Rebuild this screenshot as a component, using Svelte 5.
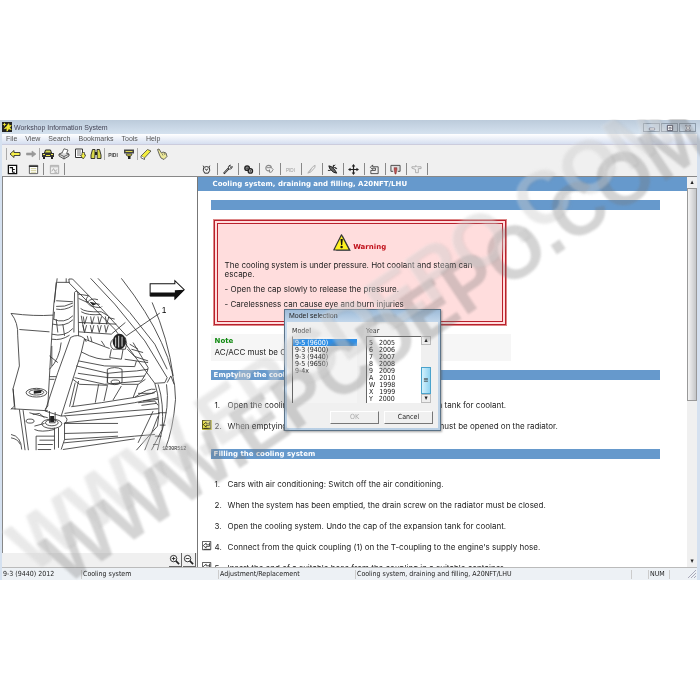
<script>
  const ink = 'fill="none" stroke="#222" stroke-width="1"';
  const dim = 'fill="none" stroke="#aaa" stroke-width="1"';
  const icons = {
    back: '<path d="M1 6 5 2.500V4.500H11V7.500H5V9.500Z" fill="#f5ef4a" stroke="#333" stroke-width=".9"/>',
    forward: '<path d="M11 6 7 3V5H1.500V7H7V9Z" fill="#999" stroke="#999" stroke-width=".6"/>',
    car: '<path d="M2.500 5 3.500 2H8.500L9.500 5Z" fill="#d8dc50" stroke="#222"/><path d="M0 5H12V9H0Z" fill="#333"/><path d="M1 6.500H3M9 6.500H11M4 7.500H8" stroke="#eee84a"/><path d="M1 9V11H3V9M9 9V11H11V9" fill="#222"/>',
    print: '<path d="M1 6 6 4 11 6V8L6 11 1 8Z" fill="#ddd" stroke="#333" stroke-width=".8"/><path d="M4 5 6 .8 10 2 8.500 5.500" fill="#fff" stroke="#444" stroke-width=".8"/><path d="M1 6 6 8.500 11 6M6 8.500V11" fill="none" stroke="#444" stroke-width=".8"/>',
    page: '<path d="M1.500 1H8.500V9.500H1.500Z" fill="#fff" stroke="#333"/><path d="M3 3H7M3 5H7M3 7H6" stroke="#555" stroke-width=".8"/><path d="M8 4.500H10.500V7H12L9.200 11 6.300 7H8Z" fill="#f3ee45" stroke="#333" stroke-width=".7"/>',
    binoculars: '<path d="M2.500 1.500H5V5L4.800 10.500H1V7ZM7 1.500H9.500L11 7V10.500H7.200V5Z" fill="#d9d94b" stroke="#222" stroke-width=".9"/><path d="M5 4H7V7H5Z" fill="#222"/>',
    pidi: '<text x="6" y="8.500" text-anchor="middle" font-family="Liberation Sans" font-weight="bold" font-size="5" fill="#444">PIDI</text>',
    pidiDim: '<text x="6" y="8.500" text-anchor="middle" font-family="Liberation Sans" font-size="5" fill="#999">PIDI</text>',
    lamp: '<path d="M1 1.500H11V5.500H1Z" fill="#444"/><path d="M2.500 3.500H9.500" stroke="#ddd84b"/><path d="M3 6H9L8 8H4Z" fill="#e6e04b" stroke="#222" stroke-width=".7"/><path d="M5 8V11H7.500V8" fill="#222"/>',
    eraser: '<path d="M1 8 7.500 1.500 11 3 4.500 10Z" fill="#f2ed3f" stroke="#444" stroke-width=".8"/><path d="M1 8V9.800L4.500 11.500V10" fill="#fff" stroke="#444" stroke-width=".8"/>',
    hand: '<path d="M3.500 7 1.500 1.500 3 1 5.500 5 7 4 10 5 11 8.500 8 11.500 5 10Z" fill="#eeea9b" stroke="#444" stroke-width=".8"/><path d="M6 5.500 7 7.500M8 5 9 7" stroke="#444" stroke-width=".6"/>',
    tree: '<path d="M1.500 1.500H10.500V10.500H1.500Z" fill="#fff" stroke="#111" stroke-width="1.400"/><path d="M3 4H6V9M6 6H8.500M6 9H8.500" fill="none" stroke="#111" stroke-width="1.200"/>',
    sheet: '<path d="M1.500 1.500H10.500V10.500H1.500Z" fill="#fff" stroke="#555"/><path d="M1 2.500H11" stroke="#333" stroke-width="1.500"/><path d="M3 5H9M3 7H9M3 9H9" stroke="#c4c07c" stroke-width=".8"/>',
    chart: `<path d="M1.500 1.500H10.500V10.500H1.500ZM2 3H10M3 8 5 5 6.500 8 9 6M6 9H9" ${dim}/>`,
    gauge: `<path d="M2 2 4 3.500Q6 2 8 3.500L10 2M3 3.500Q1.500 7 4 10H8Q10.500 7 9 3.500M4.500 5 6 7 7.500 5" ${ink}/>`,
    wrench: '<path d="M2 10.500 7 5" stroke="#222" stroke-width="2.200"/><path d="M7 5.500Q6 2 9 1L8.500 3 10 4 11 2.500Q11.500 6 7 5.500Z" fill="#fff" stroke="#222" stroke-width=".9"/><path d="M2.500 10 6.500 5.600" stroke="#eee" stroke-width=".7"/>',
    gears: '<circle cx="4.500" cy="4.500" r="2.500" fill="#999" stroke="#222" stroke-width="1.500"/><circle cx="8" cy="7.500" r="2.400" fill="#bbb" stroke="#222" stroke-width="1.400"/><circle cx="8" cy="7.500" r=".8" fill="#222"/><circle cx="4.500" cy="4.500" r=".8" fill="#222"/>',
    gearDim: '<circle cx="5" cy="4.500" r="3" fill="none" stroke="#888" stroke-width="1.200"/><path d="M3 4H8L10 6 8 9H6V6" fill="#eee" stroke="#777" stroke-width=".9"/>',
    pen: `<path d="M2 10 4 7 8 2.500 10 1.500 9.500 4 5.500 8.500Z" ${dim}/><path d="M3 9 6 6" stroke="#bbb"/>`,
    tool: '<path d="M2 2 5 3 9 7 10.500 10 7 9 3 5Z" fill="#666" stroke="#111"/><path d="M7 1V4H10M1 7H4M6 3 9 1M9 5H11" stroke="#222" fill="none"/>',
    move: '<path d="M6 2V10M2 6H10" stroke="#222" stroke-width="1.300"/><path d="M6 0 8 2.800H4ZM6 12 4 9.200H8ZM0 6 2.800 4V8ZM12 6 9.200 8V4Z" fill="#222"/>',
    turn: '<path d="M4 1 1.500 3.500 4 6V4.500H7V7H2V10.500H10V3H4Z" fill="#eee" stroke="#333" stroke-width=".9"/>',
    board: '<path d="M1 1.500H11V8H8.500M3.500 8H1V1.500" fill="#ddd" stroke="#444"/><path d="M4.500 4H7.500V6L6.500 11H5.500L4.500 6Z" fill="#c05050" stroke="#622" stroke-width=".5"/>',
    point: `<path d="M1 3H5V1.800L7 3H11V5H8V9.500H5V6L1 4.500Z" ${dim}/>`,
    link: '<path d="M.5.500H10.500V10.500H.5Z" fill="#fff" stroke="#333"/><path d="M1.500 5.500 5 2.500V4.500H9M1.500 5.500 5 8.500V6.500H9V2M2 10H10" fill="none" stroke="#222" stroke-width=".9"/>',
    zoomIn: '<circle cx="5" cy="5" r="3.500" fill="#fff" stroke="#222"/><path d="M3 5H7M5 3V7" stroke="#222"/><path d="M7.500 7.500 11 11" stroke="#222" stroke-width="1.800"/>',
    zoomOut: '<circle cx="5" cy="5" r="3.500" fill="#fff" stroke="#222"/><path d="M3 5H7" stroke="#222"/><path d="M7.500 7.500 11 11" stroke="#222" stroke-width="1.800"/>',
  };
  const menus = ['File', 'View', 'Search', 'Bookmarks', 'Tools', 'Help'];
  const tools = [
    ['back', 'forward'],
    ['car', 'print', 'page', 'binoculars'],
    ['pidi', 'lamp'],
    ['eraser', 'hand'],
  ];
  const leftTabs = ['tree', 'sheet', 'chart'];
  const rightTabs = ['gauge', 'wrench', 'gears', 'gearDim', 'pidiDim', 'pen', 'tool', 'move', 'turn', 'board', 'point'];
  const emptying = [
    { text: 'Open the cooling system. Undo the cap of the expansion tank for coolant.' },
    { text: 'When emptying the cooling system, the drain screw (1) must be opened on the radiator.', link: 'lit' },
  ];
  const filling = [
    { text: 'Cars with air conditioning: Switch off the air conditioning.' },
    { text: 'When the system has been emptied, the drain screw on the radiator must be closed.' },
    { text: 'Open the cooling system. Undo the cap of the expansion tank for coolant.' },
    { text: "Connect from the quick coupling (1) on the T-coupling to the engine's supply hose.", link: 'plain' },
    { text: 'Insert the end of a suitable hose from the coupling in a suitable container.', link: 'plain' },
  ];
  const models = ['9-5 (9600)', '9-3 (9400)', '9-3 (9440)', '9-5 (9650)', '9-4x'];
  const years = [['5', 2005], ['6', 2006], ['7', 2007], ['8', 2008], ['9', 2009], ['A', 2010], ['W', 1998], ['X', 1999], ['Y', 2000]];
  let model = $state('9-5 (9600)');
  let year = $state(null);
</script>

{#snippet icon(name)}
  <svg class="icon" viewBox="0 0 12 12" aria-hidden="true">{@html icons[name]}</svg>
{/snippet}

{#snippet steps(items)}
  <ol>
    {#each items as item, i}
      <li>
        <span class="mark">
          {#if item.link}
            <a href="#figure" class:lit={item.link === 'lit'} aria-label="Show figure">{@render icon('link')}</a>
          {/if}
        </span>
        <span class="num">{i + 1}.</span>
        <span>{item.text}</span>
      </li>
    {/each}
  </ol>
{/snippet}

<div class="page">
  <div class="window">
    <header class="title">
      <svg class="icon" viewBox="0 0 12 12" aria-hidden="true">
        <path d="M0 0H12V12H0Z" fill="#222" />
        <path d="M3 1V5M1 3H5M8 2 9 5 11 4 9 7 11 9 8 8 6 11V7L3 8 6 5Z" stroke="#f4ea34" fill="#f4ea34" />
      </svg>
      <span>Workshop Information System</span>
      <div class="winbtns">
        <button aria-label="Minimize"><svg class="icon" viewBox="0 0 12 12"><path d="M2 6H10V9H2Z" fill="#fff" stroke="#667" /></svg></button>
        <button aria-label="Maximize"><svg class="icon" viewBox="0 0 12 12"><path d="M2 2H10V10H2Z" fill="#fff" stroke="#556" stroke-width="1.500" /><path d="M4.500 5H7.500V7.500H4.500Z" fill="none" stroke="#556" /></svg></button>
        <button aria-label="Close"><svg class="icon" viewBox="0 0 12 12"><path d="M2 2H4.500L6 4 7.500 2H10L7.500 6 10 10H7.500L6 8 4.500 10H2L4.500 6Z" fill="#fff" stroke="#667" /></svg></button>
      </div>
    </header>

    <nav class="menu">
      {#each menus as m}<button>{m}</button>{/each}
    </nav>

    <div class="toolbar">
      {#each tools as group}
        <div class="group">
          {#each group as name}<button aria-label={name}>{@render icon(name)}</button>{/each}
        </div>
      {/each}
    </div>

    <div class="body">
      <section class="left">
        <div class="tabs">
          {#each leftTabs as name, i}<button class:lined={i > 0} aria-label={name}>{@render icon(name)}</button>{/each}
        </div>
        <div class="figure" id="figure">
          <svg class="drawing" viewBox="6 27 579 520" role="img" aria-label="Engine bay with coolant hoses">
            <g fill="none" stroke="#333" stroke-width="2.500" stroke-linejoin="round">
              <path d="M168 28 158 105 150 230 140 410 132 420M168 40H205M195 28V40M30 133Q100 142 156 138M30 133Q52 160 50 200L55 290 36 358 40 410 30 420M55 181 145 188M36 358 42 420M30 418 140 424" />
              <path d="M268 28 340 105 430 215 497 325 490 340 460 342 340 180 204 42 203 30 214 30 300 118 375 200M290 28 385 130 460 225 497 300M360 28Q440 130 480 220 522 310 522 390 515 480 490 542M452 100Q500 210 515 320M497 340 508 320 518 345M470 345Q488 400 482 480L450 542M495 345Q505 410 480 490L468 542M460 342Q480 400 468 470L405 542M470 430H495M475 467H492M460 500H480M455 525H470" />
              <path d="M165 95 215 98M220 70 218 190M230 72 232 200M220 70Q225 62 230 72M165 120Q190 125 215 110M165 112Q190 115 215 102M156 150Q190 165 215 140M155 165Q190 175 215 152M152 195Q190 205 215 178M152 210Q180 215 205 198M230 75 262 80M232 88 258 100M262 80Q245 95 268 110 300 120 302 112M258 100Q270 85 290 92M268 100 295 106M238 118Q250 130 300 128L320 140M240 128Q260 140 300 136M232 160 345 165M232 188 330 195 372 160M240 140 248 185M320 145 340 150M165 40 160 100M160 128 158 150M165 150 170 190M185 165 190 200" />
              <path d="M246 142 250 165 257 142M268 142 272 165 279 142M290 142 294 165 301 142M312 142 316 165 323 142M245 168 250 190 256 168M267 168 272 190 278 168M289 168 294 190 300 168M310 168 314 190 321 168" />
              <path d="M208 205Q230 192 250 208L240 250 180 440 132 425 170 310ZM250 210 325 238M240 248Q290 275 328 270M250 208 255 218M258 200 262 215M268 202 272 218M300 215 310 230M330 240 325 265 360 270 365 240M335 210Q320 225 335 240H372Q380 225 372 205" />
              <path d="M232 275 310 290 400 292 405 275 370 270M225 290 320 312 360 308 405 305 440 300M230 312 320 325 362 325 430 320M220 325 310 345 420 335 438 305 440 295 395 220M405 275 440 280M378 240 400 262M320 312 318 340M318 300Q340 290 362 300V340Q340 352 318 340ZM385 225 410 240M390 240 425 250M400 262 440 275M215 330 235 345 320 348M360 345 410 345 432 330" />
              <ellipse cx="342" cy="338" rx="13" ry="6" />
              <path d="M232 335 215 410M222 340 205 412M292 345 282 400M318 350 308 395M360 350 335 392M410 345 395 385M210 412 300 400 400 384 460 370M190 432 400 400 470 385M180 440 470 418M190 460 475 432M400 384Q440 355 462 360M410 372H450L465 365M190 492 350 488M188 462 350 462M188 520 400 500 460 495M185 540 400 508M190 510 350 500M455 425 410 520M470 440 430 542" />
              <path d="M180 220Q175 270 145 300M152 230V290M145 260 170 280M145 322H165M145 330H160" />
              <path d="M55 420 72 542M66 422 82 542M85 430 140 445M95 435 115 432 130 445M30 495Q60 500 62 540M30 505Q50 508 58 525M100 470 130 462M100 480Q120 490 160 480M105 500H160M105 500V542M115 512H160M110 525H155M110 540H150M190 440Q205 450 190 462V510L180 540M160 475V540M172 475V535M145 425V460H162V428" />
              <ellipse cx="106" cy="370" rx="31" ry="13" /><ellipse cx="106" cy="369" rx="22" ry="8" />
              <ellipse cx="87" cy="455" rx="12" ry="6" /><ellipse cx="152" cy="463" rx="30" ry="14" /><ellipse cx="152" cy="460" rx="19" ry="9" />
              <path d="M375 200 475 132M410 400 460 395 470 408M420 408 465 402M425 395 470 390" />
            </g>
            <ellipse cx="354" cy="217" rx="20" ry="23" fill="#222" />
            <path d="M343 205V232M352 200V235M362 203V232" stroke="#ddd" stroke-width="3" />
            <path d="M98 364 122 362 120 371 98 373ZM147 440H159V458H147ZM265 98 285 105 275 110Z" fill="#222" />
            <path d="M446 44H520V35L548 62 520 90V80H446Z" fill="#fff" stroke="#111" stroke-width="3" />
            <path d="M446 70H520V64L548 62 520 92V82H446Z" fill="#111" />
            <text x="481" y="131" font-size="25" font-family="Liberation Sans">1</text>
            <text x="482" y="540" font-size="15" font-family="Liberation Mono">1230R512</text>
          </svg>
        </div>
        <div class="zoom">
          <button aria-label="Zoom in">{@render icon('zoomIn')}</button>
          <button aria-label="Zoom out">{@render icon('zoomOut')}</button>
        </div>
      </section>

      <section class="right">
        <div class="tabs">
          {#each rightTabs as name}<button class="lined" aria-label={name}>{@render icon(name)}</button>{/each}
        </div>
        <div class="viewer">
          <article>
            <h1>Cooling system, draining and filling, A20NFT/LHU</h1>
            <div class="content">
              <div class="rule"></div>
              <div class="warning">
                <div class="warnhead">
                  <svg viewBox="0 0 18 18" aria-hidden="true">
                    <path d="M10 2 18 17H3Z" fill="#777" />
                    <path d="M8.500.800 16.500 16H.8Z" fill="#fff11f" stroke="#333" stroke-width="1.200" stroke-linejoin="round" />
                    <path d="M7.500 5H9.800L9.200 11H8.100Z" fill="#111" /><circle cx="8.600" cy="13" r="1.200" fill="#111" />
                  </svg>
                  <strong>Warning</strong>
                </div>
                <p>The cooling system is under pressure. Hot coolant and steam can escape.</p>
                <p>- Open the cap slowly to release the pressure.</p>
                <p>- Carelessness can cause eye and burn injuries</p>
              </div>
              <div class="note"><strong>Note</strong><span>AC/ACC must be OFF.</span></div>
              <h2>Emptying the cooling system</h2>
              {@render steps(emptying)}
              <h2>Filling the cooling system</h2>
              {@render steps(filling)}
            </div>
          </article>
          <div class="scroll">
            <button aria-label="Scroll up">▴</button>
            <div class="track"><div class="thumb"></div></div>
            <button aria-label="Scroll down">▾</button>
          </div>
        </div>
      </section>
    </div>

    <footer>
      <span class="s1">9-3 (9440) 2012</span>
      <span class="s2">Cooling system</span>
      <span class="s2">Adjustment/Replacement</span>
      <span class="s3">Cooling system, draining and filling, A20NFT/LHU</span>
      <span class="s4"></span>
      <span class="s5">NUM</span>
      <svg class="grip" viewBox="0 0 10 10" aria-hidden="true"><path d="M1 9 9 1M4 9 9 4M7 9 9 7" stroke="#aab" /></svg>
    </footer>

    <div class="dialog" role="dialog" aria-label="Model selection">
      <div class="dtitle">Model selection</div>
      <div class="dbody">
        <div class="cols">
          <div class="col">
            <label for="model">Model</label>
            <select id="model" class="plain" size="9" bind:value={model}>
              {#each models as m}<option value={m}>{m}</option>{/each}
            </select>
          </div>
          <div class="col">
            <label for="year">Year</label>
            <div class="listrow">
              <select id="year" size="9" bind:value={year}>
                {#each years as [code, y]}<option value={y}>{code}{'\u00a0'.repeat(code === 'W' ? 2 : 3)}{y}</option>{/each}
              </select>
              <div class="scroll small">
                <button aria-label="Previous years">▴</button>
                <div class="track"><div class="thumb">≡</div></div>
                <button aria-label="Later years">▾</button>
              </div>
            </div>
          </div>
        </div>
        <div class="actions">
          <button disabled>OK</button>
          <button>Cancel</button>
        </div>
      </div>
    </div>
  </div>

  <div class="watermark" aria-hidden="true">
    <span class="shade">WWW.EPCDEPO.COM</span>
    <span class="glow">WWW.EPCDEPO.COM</span>
  </div>
</div>

<style>
  :global(body) { margin: 0; background: #fff; }
  .page {
    position: relative;
    display: flex;
    flex-direction: column;
    box-sizing: border-box;
    height: 100vh;
    padding: 120px 0;
    overflow: hidden;
    font: 7px/9px "DejaVu Sans Condensed", "DejaVu Sans", sans-serif;
    color: #222;
  }
  button { margin: 0; padding: 0; border: 0; background: none; font: inherit; color: inherit; }
  .icon { display: block; width: 12px; height: 12px; }
  .window {
    position: relative;
    flex: 1;
    min-height: 0;
    display: flex;
    flex-direction: column;
    background: #f0f0f0;
    border-right: 3px solid #d5e1f0;
    border-left: 2px solid #d5e1f0;
  }
  .title {
    display: flex;
    align-items: center;
    gap: 2px;
    height: 14px;
    margin: 0 -3px 0 -2px;
    padding: 0 4px 0 2px;
    background: linear-gradient(#bccbdb, #d5e2ef);
    font-family: "Liberation Sans", sans-serif;
    color: #445;
  }
  .title > .icon { width: 10px; height: 10px; }
  .winbtns { display: flex; gap: 1px; margin-left: auto; }
  .winbtns button { display: grid; place-items: center; width: 17px; height: 9px; border: 1px solid #8e9cab; }
  .winbtns .icon { width: 8px; height: 8px; }
  .menu {
    display: flex;
    gap: 8px;
    height: 10px;
    padding: 0 4px;
    border-bottom: 1px solid #ccd;
    background: linear-gradient(#fff, #d6dff0);
    font-family: "Liberation Sans", sans-serif;
    line-height: 10px;
    color: #555;
  }
  .toolbar { display: flex; align-items: center; height: 17px; padding-left: 4px; }
  .group { display: flex; gap: 4px; padding: 0 2px; border-left: 1px solid #aaa; }
  .body { flex: 1; min-height: 0; display: flex; gap: 2px; }
  .left, .right { display: flex; flex-direction: column; min-width: 0; }
  .left { flex: 0 0 28%; margin-right: -2px; }
  .right { flex: 1; }
  .tabs { display: flex; align-items: center; height: 14px; flex: none; border-bottom: 1px solid #888; }
  .tabs button { display: grid; place-items: center; width: 21px; height: 12px; }
  .tabs .icon { width: 11px; height: 11px; }
  .tabs .lined { border-right: 1px solid #888; box-sizing: border-box; }
  .figure { flex: 1; min-height: 0; display: flex; align-items: center; background: #fff; border-left: 1px solid #888; }
  .drawing { width: 100%; }
  .zoom { display: flex; justify-content: flex-end; gap: 1px; height: 14px; padding-right: 1px; }
  .zoom button { width: 13px; border-right: 1px solid #666; border-bottom: 1px solid #666; }
  .zoom .icon { width: 11px; height: 11px; }
  .viewer { flex: 1; min-height: 0; display: flex; background: #fff; border-left: 1px solid #777; }
  article { flex: 1; overflow: hidden; font: 8px/9px Inter, "Noto Sans", sans-serif; }
  h1, h2 { margin: 0; background: #6699cc; color: #fff; }
  h1, h2, strong { font: bold 7px/10px "DejaVu Sans", sans-serif; }
  h1 { padding: 2px 15px; }
  .content { padding: 9px 27px 0 13px; }
  .rule { height: 10px; background: #6699cc; }
  .warning {
    box-sizing: border-box;
    width: 65%;
    margin: 10px 3px 9px;
    padding: 10px 7px 12px;
    border: 4px double #b9202c;
    outline: 1px solid #d88;
    background: #fdd;
  }
  .warnhead { display: flex; justify-content: center; align-items: flex-end; gap: 2px; color: #c1121c; }
  .warnhead svg { width: 18px; height: 18px; }
  .warning p { margin: 0 20px 6px 0; }
  .warnhead + p { margin-top: 9px; }
  .warning p:last-child { margin-bottom: 0; }
  .note { display: flex; flex-direction: column; gap: 2px; width: 65%; padding: 2px 4px 4px; background: #f6f6f6; }
  .note strong { color: #108a10; }
  h2 { margin-top: 9px; padding: 0 3px; }
  ol { margin: 21px 0 18px -11px; padding: 0; list-style: none; display: flex; flex-direction: column; gap: 12px; }
  li { display: flex; height: 9px; white-space: nowrap; }
  .mark { width: 15px; }
  .mark a { display: block; width: 10px; height: 10px; margin: -2px 0 0 2px; }
  .mark .icon { width: 10px; height: 10px; }
  .mark .lit { background: #e8e04a; }
  .lit .icon { mix-blend-mode: multiply; }
  .num { width: 13px; }
  .scroll { display: flex; flex-direction: column; width: 10px; background: #f0f0f0; }
  .scroll button { height: 11px; text-align: center; line-height: 9px; }
  .track { flex: 1; }
  .thumb { box-sizing: border-box; height: 58%; border: 1px solid #999; background: linear-gradient(90deg, #f4f4f4, #c4c6c8); }
  footer {
    display: flex;
    align-items: center;
    height: 12px;
    border-top: 1px solid #bbb;
    background: #edf1f5;
    white-space: nowrap;
  }
  footer span { box-sizing: border-box; height: 9px; border-right: 1px solid #ccc; padding-left: 1px; }
  .s1 { flex: 0 0 80px; }
  .s2 { flex: 0 0 137px; }
  .s3 { flex: 1; }
  .s4 { width: 17px; }
  .s5 { width: 21px; }
  .grip { width: 10px; height: 10px; margin-left: 17px; }
  .dialog {
    position: absolute;
    top: 189px;
    left: 282px;
    width: 155px;
    border: 1px solid #5b7388;
    background: linear-gradient(#9dbbd8, #c8dbee 14px, #b9cfe4);
    box-shadow: 1px 1px 2px #5558;
  }
  .dtitle { padding: 1px 4px; line-height: 10px; font-family: "Liberation Sans", sans-serif; }
  .dbody { margin: 0 2px 2px; padding: 5px 5px 4px; background: #f0f0f0; }
  .cols { display: flex; gap: 9px; }
  .col { display: flex; flex-direction: column; width: 65px; }
  select {
    display: block;
    box-sizing: border-box;
    flex: 1;
    width: 100%;
    height: 67px;
    min-width: 0;
    padding: 2px 0 0;
    border: 0;
    border-top: 1px solid #666;
    border-left: 1px solid #666;
    border-radius: 0;
    outline: 0;
    overflow: hidden;
    background: #fff;
    color: #222;
    font: 7px/7px "DejaVu Sans Condensed", "DejaVu Sans", sans-serif;
  }
  .plain { border-top-color: #f0f0f0; background: #f4f4f4; }
  option { height: 7px; min-height: 7px; padding: 0 2px; line-height: 7px; }
  option:checked { background: #2f8fe6 linear-gradient(#2f8fe6, #2f8fe6); color: #fff; }
  .listrow { display: flex; }
  .small { height: 67px; }
  .small button { height: 9px; line-height: 7px; border: 1px solid #bbb; background: #eee; }
  .small .track { display: flex; align-items: flex-end; }
  .small .thumb { width: 100%; height: 27px; line-height: 25px; text-align: center; border-color: #4aa3cc; background: linear-gradient(90deg, #d4f1fc, #8fd3f2); }
  .actions { display: flex; justify-content: flex-end; gap: 5px; margin-top: 8px; }
  .actions button { box-sizing: border-box; width: 49px; height: 13px; border-right: 1px solid #777; border-bottom: 1px solid #777; border-top: 1px solid #fff; border-left: 1px solid #fff; }
  .actions button:disabled { color: #aaa; }
  .watermark { position: absolute; inset: 119px 0; overflow: hidden; pointer-events: none; font: bold 74px/74px "Liberation Sans", sans-serif; }
  .watermark span { position: absolute; left: 72px; top: 403px; transform-origin: 0 100%; transform: rotate(-34deg); white-space: nowrap; filter: blur(1px); }
  .watermark .shade { color: #77777750; }
  .watermark .glow { left: 36px; top: 391px; color: #f4f4f448; text-shadow: 1px 1px 2px #7773; }
</style>
